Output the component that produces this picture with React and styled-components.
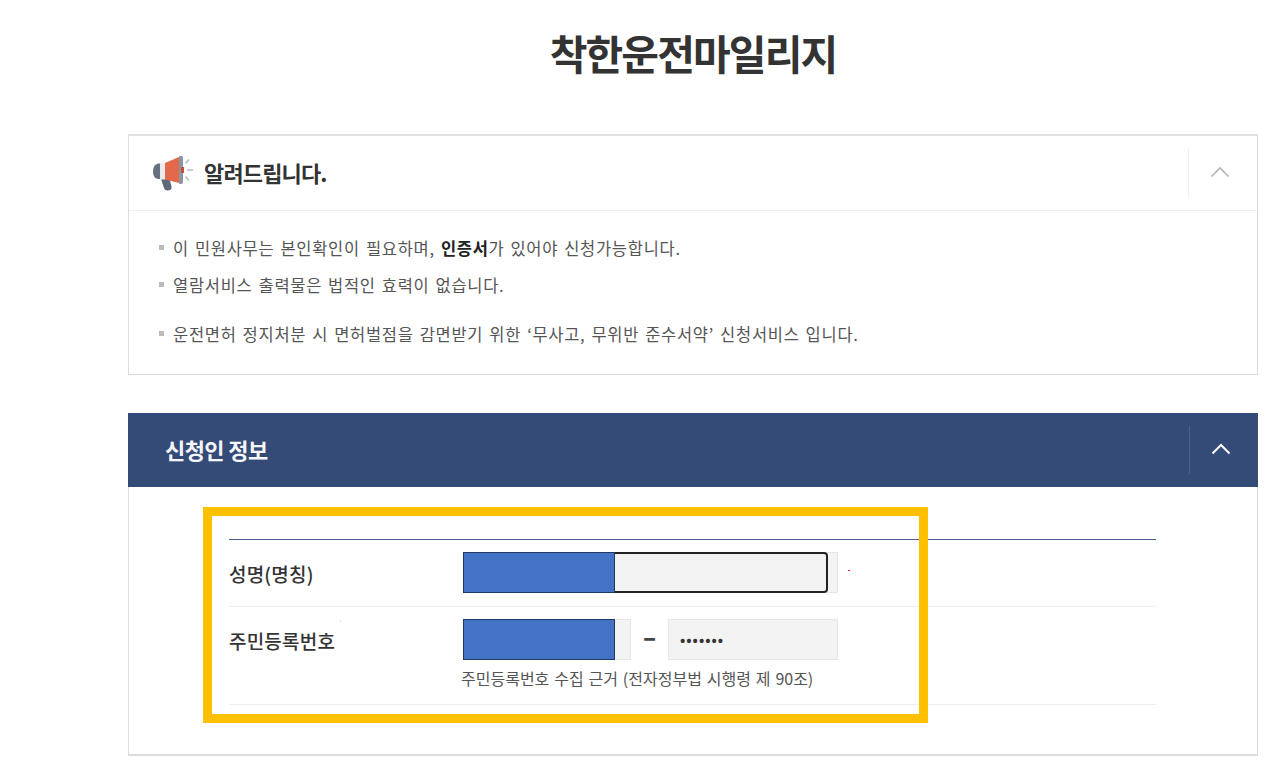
import React from 'react';
import styled, { createGlobalStyle } from 'styled-components';

const Global = createGlobalStyle`
  html, body { margin: 0; padding: 0; background: #fff; }
  body { font-family: "Noto Sans CJK KR", "Noto Sans", sans-serif; color: #333; }
`;
const Page = styled.div`
  width: 1130px;
  height: 765px;
  margin-left: 128px;
  overflow: hidden;
  display: flex;
  flex-direction: column;
`;
const Title = styled.h1`
  margin: 0;
  height: 134px;
  padding-top: 25px;
  box-sizing: border-box;
  text-align: center;
  font-size: 41px;
  line-height: 54px;
  font-weight: 700;
  letter-spacing: -1.9px;
  color: #333;
`;
const Notice = styled.section`
  height: 241px;
  box-sizing: border-box;
  border-style: solid;
  border-width: 2px 1px 1px 1px;
  border-color: #e0e0e0 #dcdcdc #dcdcdc #dcdcdc;
`;
const NoticeHead = styled.header`
  height: 75px;
  box-sizing: border-box;
  border-bottom: 1px solid #eee;
  display: flex;
  align-items: center;
  padding-left: 24px;
  gap: 11px;
`;
const HeadText = styled.h2`
  margin: 0 0 3px;
  flex: 1;
  font-size: 22px;
  font-weight: 700;
  letter-spacing: -0.85px;
  color: #333;
`;
const Toggle = styled.div`
  width: 69px;
  height: 48px;
  border-left: 1px solid ${p => p.$line};
  display: flex;
  align-items: center;
  justify-content: center;
  box-sizing: border-box;
  padding: 0 6px 2px 0;
`;
const NoticeList = styled.ul`
  list-style: none;
  margin: 0;
  padding: 19px 0 0 30px;
  font-size: 16.5px;
  letter-spacing: 0.7px;
  word-spacing: 1.7px;
  color: #555;
`;
const NoticeItem = styled.li`
  height: ${p => p.$h}px;
  line-height: 36px;
  display: flex;
  align-items: flex-start;
  white-space: pre;
  &::before {
    content: "";
    width: 5px;
    height: 5px;
    background: #bbb;
    margin: 15px 9px 0 0;
    flex: none;
  }
  b { font-weight: 700; color: #222; }
`;
const Section = styled.section`
  margin-top: 38px;
  flex: 1;
  display: flex;
  flex-direction: column;
  position: relative;
`;
const SectionHead = styled.header`
  height: 74px;
  background: #344b77;
  display: flex;
  align-items: center;
  padding-left: 37px;
  flex: none;
`;
const SectionTitle = styled.h2`
  margin: 0 0 2px;
  flex: 1;
  font-size: 22px;
  font-weight: 700;
  letter-spacing: -0.6px;
  color: #f4f6fa;
`;
const SectionBody = styled.div`
  height: 269px;
  box-sizing: border-box;
  border: 1px solid #dcdcdc;
  border-top: 0;
  border-bottom-width: 2px;
  padding: 52px 101px 0 100px;
`;
const Table = styled.div`
  border-top: 1px solid #4a5d8a;
`;
const Row = styled.div`
  height: ${p => p.$h}px;
  box-sizing: border-box;
  border-bottom: 1px solid #eee;
  display: flex;
  padding-top: 12px;
`;
const Label = styled.div`
  width: 234px;
  flex: none;
  font-size: 19px;
  font-weight: 500;
  letter-spacing: 0.2px;
  line-height: 44px;
  color: #333;
  position: relative;
`;
const Field = styled.div`
  flex: 1;
  position: relative;
`;
const Input = styled.div`
  box-sizing: border-box;
  width: ${p => p.$w}px;
  height: 41px;
  background: #f3f3f3;
  border: 1px solid #e6e6e6;
  flex: none;
  font-size: 14px;
  line-height: 38px;
  letter-spacing: 1px;
  padding-left: 11px;
  color: #333;
  font-weight: 700;
  position: relative;
`;
const InputRow = styled.div`
  display: flex;
  align-items: center;
`;
const Dash = styled.span`
  width: 37px;
  text-align: center;
  font-size: 24px;
  font-weight: 900;
  line-height: 34px;
  padding-bottom: 7px;
  color: #444;
`;
const Focus = styled.div`
  position: absolute;
  left: 0;
  top: 0;
  width: 365px;
  height: 41px;
  box-sizing: border-box;
  border: 2px solid #222;
  border-radius: 4px;
`;
const Mask = styled.div`
  position: absolute;
  left: 0;
  top: 0;
  width: 152px;
  height: 41px;
  box-sizing: border-box;
  background: #4472c4;
  border: 1px solid #1f3864;
`;
const Hint = styled.div`
  margin: 6px 0 0 -2px;
  font-size: 16px;
  letter-spacing: 0;
  word-spacing: 1.3px;
  line-height: 24px;
  color: #555;
`;
const Dot = styled.i`
  position: absolute;
  width: ${p => p.$s}px;
  height: 1px;
  background: ${p => p.$c};
  left: ${p => p.$x}px;
  top: ${p => p.$y}px;
`;
const Highlight = styled.div`
  position: absolute;
  left: 75px;
  top: 94px;
  width: 725px;
  height: 216px;
  box-sizing: border-box;
  border: 9px solid #ffc000;
  pointer-events: none;
`;

const Chevron = ({ color, w }) => (
  <svg width="20" height="12" viewBox="0 0 20 12" fill="none">
    <path d="M1.5 10.5 L10 2 L18.5 10.5" stroke={color} strokeWidth={w} />
  </svg>
);

const Megaphone = () => (
  <svg width="40" height="35" viewBox="0 0 40 35" fill="none">
    <path d="M8 23 L11 32 Q12 35 15 34.5 L17 34 Q19 33 18.5 30.5 L16.5 23 Z" fill="#5d6a79" />
    <path d="M5 7.5 H8 V23 H5 Q0 22 0 15.5 Q0 8.5 5 7.5 Z" fill="#66707e" />
    <rect x="7" y="7" width="5" height="16.5" fill="#ecebee" />
    <path d="M12 7 L26 1 V27 L12 23.5 Z" fill="#e4694a" />
    <path d="M26 0.5 Q26 0 27 0 H28.5 Q30 0 30 2 V26 Q30 28 28.5 28 H27 Q26 28 26 27 Z" fill="#8c95a3" />
    <path d="M28 11 h3 v6 h-3 Z" fill="#c9503a" />
    <path d="M32.5 7.5 L36 3.5 M34 14 H40 M32.5 20.5 L36 24.5" stroke="#b4bbc6" strokeWidth="1.6" />
  </svg>
);

export default function App() {
  return (
    <Page>
      <Global />
      <Title>착한운전마일리지</Title>
      <Notice>
        <NoticeHead>
          <Megaphone />
          <HeadText>알려드립니다.</HeadText>
          <Toggle $line="#eee"><Chevron color="#b5b5b5" w="1.6" /></Toggle>
        </NoticeHead>
        <NoticeList>
          <NoticeItem $h={37}><span>이 민원사무는 본인확인이 필요하며, <b>인증서</b>가 있어야 신청가능합니다.</span></NoticeItem>
          <NoticeItem $h={49}>열람서비스 출력물은 법적인 효력이 없습니다.</NoticeItem>
          <NoticeItem $h={36}>운전면허 정지처분 시 면허벌점을 감면받기 위한 ‘무사고, 무위반 준수서약’ 신청서비스 입니다.</NoticeItem>
        </NoticeList>
      </Notice>
      <Section>
        <SectionHead>
          <SectionTitle>신청인 정보</SectionTitle>
          <Toggle $line="#4a6089"><Chevron color="#ffffff" w="2" /></Toggle>
        </SectionHead>
        <SectionBody>
          <Table>
            <Row $h={67}>
              <Label>성명(명칭)</Label>
              <Field>
                <Input $w={375} />
                <Focus />
                <Mask />
                <Dot $s={2} $c="#f02020" $x={385} $y={18} />
              </Field>
            </Row>
            <Row $h={98}>
              <Label>주민등록번호<Dot $s={1} $c="#f5b5b5" $x={111} $y={2} /></Label>
              <Field>
                <InputRow>
                  <Input $w={168} />
                  <Dash>–</Dash>
                  <Input $w={170}>•••••••</Input>
                </InputRow>
                <Mask />
                <Hint>주민등록번호 수집 근거 (전자정부법 시행령 제 90조)</Hint>
              </Field>
            </Row>
          </Table>
        </SectionBody>
        <Highlight />
      </Section>
    </Page>
  );
}
